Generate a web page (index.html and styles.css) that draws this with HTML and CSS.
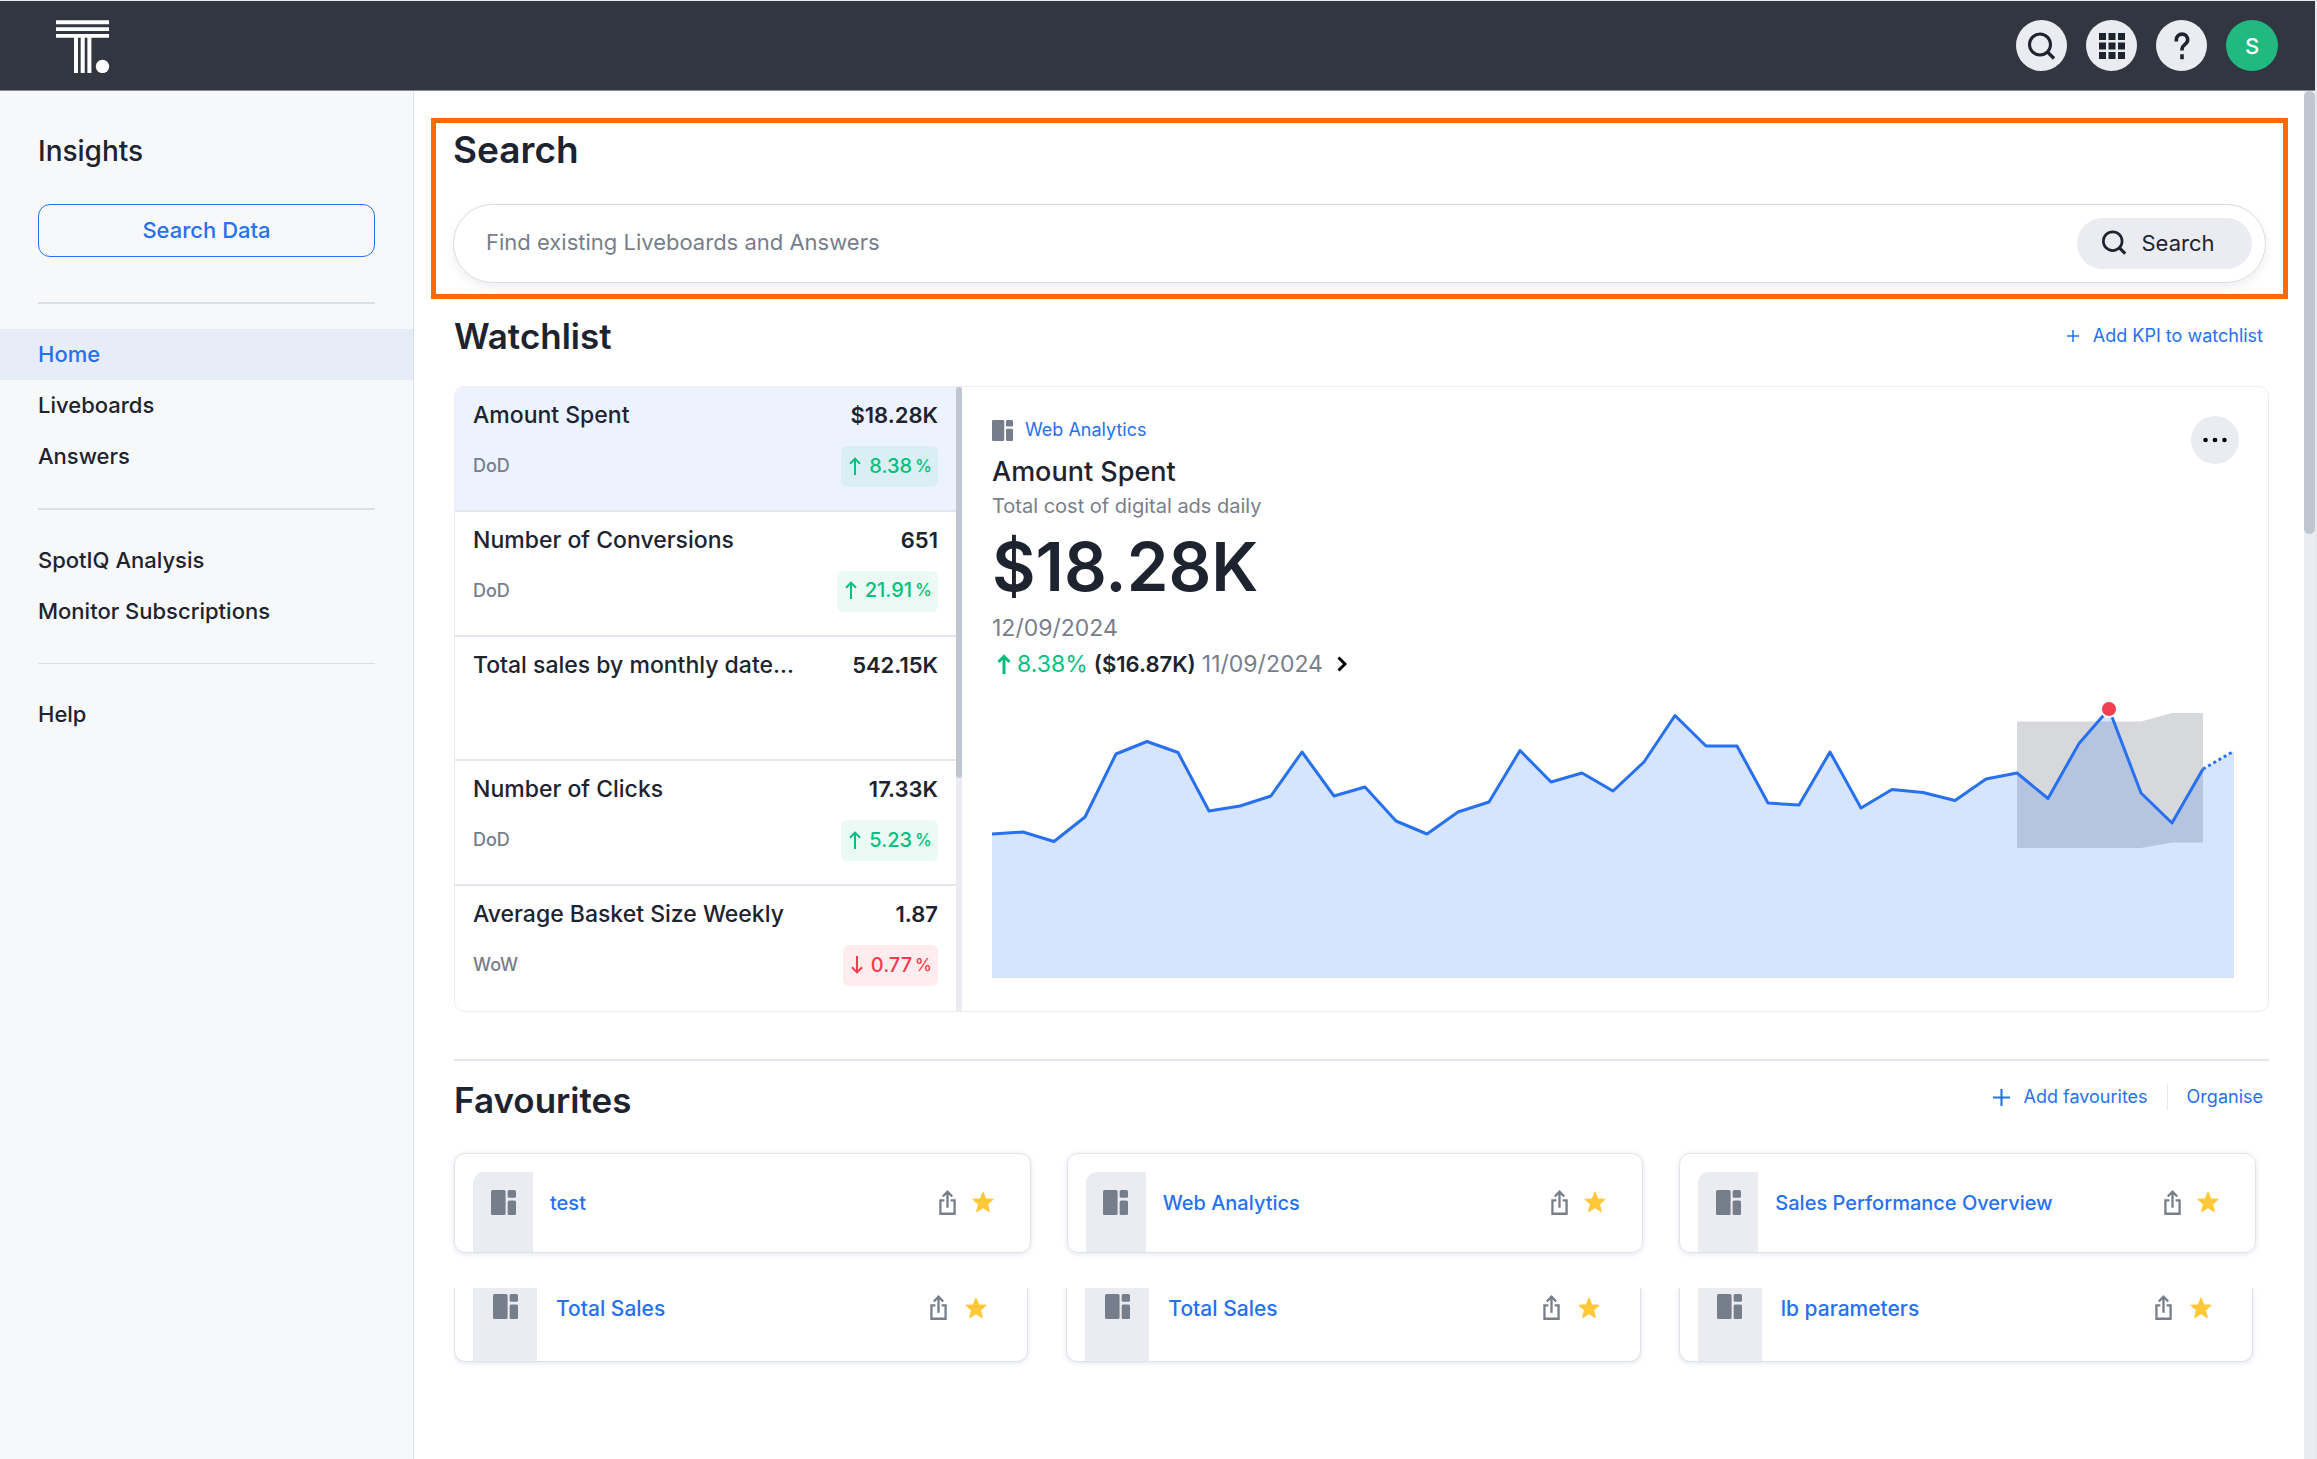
FILE: index.html
```html
<!DOCTYPE html>
<html lang="en">
<head>
<meta charset="utf-8">
<title>Insights – Home</title>
<link rel="stylesheet" href="styles.css">
</head>
<body>
<svg class="sprite" aria-hidden="true">
  <symbol id="board" viewBox="0 0 24 24"><rect width="14" height="24" rx="1.5"/><rect x="16" width="8" height="7.5" rx="1.5"/><rect x="16" y="10" width="8" height="14" rx="1.5"/></symbol>
  <symbol id="lens" viewBox="0 0 28 28" fill="none" stroke="currentColor"><circle cx="12" cy="12.500" r="10.500" stroke-width="3"/><path d="M19.500 20 26 26.500" stroke-width="3.400"/></symbol>
  <symbol id="share" viewBox="0 0 16 24" fill="none" stroke="currentColor" stroke-width="2.200"><path d="M5 10H1.200v12.800h13.600V10H11M8 17V2M3.500 6.200 8 1.600l4.500 4.600"/></symbol>
  <symbol id="star" viewBox="0 0 22 22"><path fill="currentColor" stroke="currentColor" stroke-width="1.200" stroke-linejoin="round" d="m11 1.200 2.700 6.700 7.200.5-5.500 4.600 1.800 7.400-6.200-3.900-6.200 3.900 1.800-7.400L1.100 8.400l7.200-.5z"/></symbol>
  <symbol id="arrow" viewBox="0 0 12 18" fill="none" stroke="currentColor"><path d="M6 18V2M1 6.700 6 1.600l5 5.100"/></symbol>
  <symbol id="plus" viewBox="0 0 16 16" stroke="currentColor" fill="none"><path d="M8 0v16M0 8h16"/></symbol>
</svg>
<div class="app">
  <header class="topbar">
    <a class="logo" href="#" aria-label="Home">
      <svg viewBox="0 0 54 54" fill="#fff"><path d="M0 1.200h53v4H0zM0 8.200h53v3.800H0zM0 15h53v3.800H0zM18 18h4v36h-4zM24.700 18h4v36h-4zM31.400 18h4v36h-4z"/><circle cx="46.500" cy="47.500" r="6.700"/></svg>
    </a>
    <nav class="tools" aria-label="Tools">
      <button class="round" aria-label="Search"><svg width="28" height="28"><use href="#lens"/></svg></button>
      <button class="round" aria-label="Apps"><svg width="28" height="28" viewBox="0 0 28 28" fill="currentColor"><path d="M1 1h7v7H1zM10.500 1h7v7h-7zM20 1h7v7h-7zM1 10.500h7v7H1zM10.500 10.500h7v7h-7zM20 10.500h7v7h-7zM1 20h7v7H1zM10.500 20h7v7h-7zM20 20h7v7h-7z"/></svg></button>
      <button class="round" aria-label="Help"><svg width="16" height="28" viewBox="0 0 16 28" fill="none" stroke="currentColor" stroke-width="3.600"><path d="M2.300 9.500V7.800a5.700 5.700 0 0 1 11.400 0c0 5-5.700 4.700-5.700 9.200v1.500M8 22.300v5"/></svg></button>
      <button class="round avatar">S</button>
    </nav>
  </header>
  <div class="shell">
    <aside class="sidebar">
      <h1 class="sidebar-title">Insights</h1>
      <button class="outline">Search Data</button>
      <hr>
      <nav class="menu">
        <a class="active" href="#">Home</a>
        <a href="#">Liveboards</a>
        <a href="#">Answers</a>
      </nav>
      <hr>
      <nav class="menu">
        <a href="#">SpotIQ Analysis</a>
        <a href="#">Monitor Subscriptions</a>
      </nav>
      <hr class="thin">
      <nav class="menu"><a href="#">Help</a></nav>
    </aside>
    <main class="main">
      <section class="search">
        <h2>Search</h2>
        <form class="searchbox">
          <input type="text" aria-label="Search" placeholder="Find existing Liveboards and Answers">
          <button type="button" class="search-button"><svg width="25" height="25"><use href="#lens"/></svg>Search</button>
        </form>
      </section>
      <section class="block">
        <div class="heading">
          <h2>Watchlist</h2>
          <a class="action" href="#"><svg class="plus" width="12" height="12"><use href="#plus"/></svg>Add KPI to watchlist</a>
        </div>
        <div class="watch">
          <ul class="kpis">
            <li class="selected"><span class="name">Amount Spent</span><b>$18.28K</b><span class="period">DoD</span><span class="badge"><svg><use href="#arrow"/></svg>8.38<small>%</small></span></li>
            <li><span class="name">Number of Conversions</span><b>651</b><span class="period">DoD</span><span class="badge"><svg><use href="#arrow"/></svg>21.91<small>%</small></span></li>
            <li><span class="name">Total sales by monthly date…</span><b>542.15K</b></li>
            <li><span class="name">Number of Clicks</span><b>17.33K</b><span class="period">DoD</span><span class="badge"><svg><use href="#arrow"/></svg>5.23<small>%</small></span></li>
            <li><span class="name">Average Basket Size Weekly</span><b>1.87</b><span class="period">WoW</span><span class="badge down"><svg viewBox="0 0 12 18" fill="none" stroke="currentColor"><path d="M6 0v16M1 11.300l5 5.100 5-5.100"/></svg>0.77<small>%</small></span></li>
          </ul>
          <div class="track"><div class="thumb"></div></div>
          <article class="detail">
            <div class="detail-head">
              <div>
                <a class="source" href="#"><svg width="21" height="21"><use href="#board"/></svg>Web Analytics</a>
                <h3>Amount Spent</h3>
                <p class="subtitle">Total cost of digital ads daily</p>
                <p class="big">$18.28K</p>
                <p class="date">12/09/2024</p>
                <p class="change"><svg class="up" width="14" height="20" viewBox="0 0 14 20"><path d="M7 20V3M1.500 8 7 2.300 12.500 8"/></svg><span class="gain">8.38%</span><b>($16.87K)</b><span>11/09/2024</span><svg class="chevron" width="10" height="16" viewBox="0 0 10 16"><path d="m1.500 1.500 6.500 6.500-6.500 6.500"/></svg></p>
              </div>
              <button class="more" aria-label="More"><svg width="24" height="6" viewBox="0 0 24 6"><circle cx="2.500" cy="3" r="2.300"/><circle cx="12" cy="3" r="2.300"/><circle cx="21.500" cy="3" r="2.300"/></svg></button>
            </div>
            <svg class="chart" viewBox="0 700 1242 280" role="img" aria-label="Amount spent per day">
              <path fill="#d7d8dc" d="M1025 722.500h124l31-8.500h31v129.500h-31l-31 5.500h-124z"/>
              <path fill="#2770ef" fill-opacity=".19" d="M0 835 31 833 62 842.500 93 818 124 755 155 742.500 186 753.500 217 812 248 807 279 797 310 753 342 797 373 788 404 822 435 835 466 813 497 803 528 751.500 559 783 590 774 621 792 652 763 683 716.500 714 747 745 747 776 804 807 806 838 753 869 809 900 790.500 931 793.500 963 801.500 994 780 1025 774 1056 799.500 1087 744.500 1117 710 1149 794 1180 824 1211 770 1242 752V979H0z"/>
              <path class="line" d="M0 835 31 833 62 842.500 93 818 124 755 155 742.500 186 753.500 217 812 248 807 279 797 310 753 342 797 373 788 404 822 435 835 466 813 497 803 528 751.500 559 783 590 774 621 792 652 763 683 716.500 714 747 745 747 776 804 807 806 838 753 869 809 900 790.500 931 793.500 963 801.500 994 780 1025 774 1056 799.500 1087 744.500 1117 710 1149 794 1180 824 1211 770"/>
              <path class="line dotted" d="M1211 770 1242 752"/>
              <circle cx="1117" cy="710" r="8" fill="#f04052" stroke="#fff" stroke-width="2"/>
            </svg>
          </article>
        </div>
      </section>
      <section class="block favourites">
        <div class="heading">
          <h2>Favourites</h2>
          <div class="actions">
            <a class="action" href="#"><svg class="plus bold" width="17" height="17"><use href="#plus"/></svg>Add favourites</a>
            <a class="action last" href="#">Organise</a>
          </div>
        </div>
        <ul class="cards">
          <li><span class="tile"><svg><use href="#board"/></svg></span><a href="#">test</a><button aria-label="Share"><svg class="share"><use href="#share"/></svg></button><button aria-label="Unfavourite"><svg class="star"><use href="#star"/></svg></button></li>
          <li><span class="tile"><svg><use href="#board"/></svg></span><a href="#">Web Analytics</a><button aria-label="Share"><svg class="share"><use href="#share"/></svg></button><button aria-label="Unfavourite"><svg class="star"><use href="#star"/></svg></button></li>
          <li><span class="tile"><svg><use href="#board"/></svg></span><a href="#">Sales Performance Overview</a><button aria-label="Share"><svg class="share"><use href="#share"/></svg></button><button aria-label="Unfavourite"><svg class="star"><use href="#star"/></svg></button></li>
        </ul>
        <ul class="cards cut">
          <li><span class="tile"><svg><use href="#board"/></svg></span><a href="#">Total Sales</a><button aria-label="Share"><svg class="share"><use href="#share"/></svg></button><button aria-label="Unfavourite"><svg class="star"><use href="#star"/></svg></button></li>
          <li><span class="tile"><svg><use href="#board"/></svg></span><a href="#">Total Sales</a><button aria-label="Share"><svg class="share"><use href="#share"/></svg></button><button aria-label="Unfavourite"><svg class="star"><use href="#star"/></svg></button></li>
          <li><span class="tile"><svg><use href="#board"/></svg></span><a href="#">lb parameters</a><button aria-label="Share"><svg class="share"><use href="#share"/></svg></button><button aria-label="Unfavourite"><svg class="star"><use href="#star"/></svg></button></li>
        </ul>
      </section>
    </main>
    <div class="page-track"><div class="page-thumb"></div></div>
  </div>
</div>
</body>
</html>
```
FILE: styles.css
```css
* { box-sizing: border-box; }

body {
  margin: 0;
  background: #fff;
  color: #1d232f;
  font-family: Inter, "Liberation Sans", sans-serif;
  font-size: 22px;
  font-weight: 500;
}

h1, h2, h3, p, ul { margin: 0; padding: 0; }
ul { list-style: none; }
a { color: #2770ef; text-decoration: none; }
svg { display: block; flex: none; }
button { padding: 0; border: 0; background: none; color: inherit; font: inherit; cursor: pointer; }
.sprite { position: absolute; width: 0; height: 0; }

.app {
  display: flex;
  flex-direction: column;
  min-height: 100vh;
  border-top: 1px solid #e6e9ee;
  border-right: 2px solid #e6e9ee;
}

/* Top bar */
.topbar {
  display: flex;
  align-items: center;
  justify-content: space-between;
  height: 90px;
  padding: 0 37px 0 56px;
  background: #323641;
  border-bottom: 1px solid #8b8d96;
}
.logo svg { width: 54px; height: 54px; }
.tools { display: flex; gap: 19px; }
.round {
  display: flex;
  align-items: center;
  justify-content: center;
  width: 51px;
  height: 51px;
  border-radius: 50%;
  background: #eaecf2;
}
.avatar { width: 52px; background: #20b980; color: #fff; }

.shell { display: flex; flex: 1; }

/* Sidebar */
.sidebar {
  flex: none;
  width: 414px;
  padding-top: 40px;
  background: #f7f8fa;
  border-right: 1px solid #d9dde6;
}
.sidebar-title { padding-left: 38px; font-size: 28px; font-weight: 500; line-height: 40px; }
.outline {
  display: block;
  width: calc(100% - 76px);
  height: 53px;
  margin: 33px 38px 45px;
  padding-bottom: 2px;
  border: 1px solid #2770ef;
  border-radius: 12px;
  color: #2770ef;
}
.sidebar hr { height: 2px; margin: 26px 38px 25px; border: 0; background: #d9dfe7; }
.sidebar hr.thin { height: 1px; }
.menu a { display: block; padding-left: 38px; color: inherit; line-height: 51px; }
.menu .active { background: #e6edf9; color: #2770ef; }

/* Search */
.main { flex: 1; min-width: 0; padding: 27px 16px 40px 17px; }
h2 { font-size: 35px; font-weight: 600; line-height: 44px; }
.search { padding: 5px 17px 11px; border: 5px solid #ff6b00; }
.search h2 { font-size: 37px; }
.searchbox {
  display: flex;
  align-items: center;
  height: 79px;
  margin-top: 32px;
  padding: 0 13px 0 32px;
  border: 1px solid #d9dbe4;
  border-radius: 40px;
  box-shadow: 0 4px 10px rgba(30, 40, 60, .08);
}
.searchbox input { flex: 1; min-width: 0; padding: 0 0 3px; border: 0; outline: 0; background: none; font: inherit; font-weight: 400; }
.searchbox input::placeholder { color: #777e8b; opacity: 1; }
.search-button {
  display: flex;
  align-items: center;
  justify-content: center;
  gap: 14px;
  width: 175px;
  height: 51px;
  padding: 0 12px 2px 0;
  border-radius: 26px;
  background: #eaecf2;
  font-weight: 400;
}

/* Watchlist */
.block { padding: 15px 19px 0 23px; }
.heading { display: flex; align-items: center; justify-content: space-between; padding-right: 6px; }
.action { display: flex; align-items: center; gap: 14px; font-size: 18px; font-weight: 400; line-height: 26px; }
.plus { stroke-width: 2px; }
.watch {
  display: flex;
  margin-top: 28px;
  border: 1px solid #ebedf3;
  border-radius: 10px;
  overflow: hidden;
}
.kpis { display: grid; grid-template-rows: repeat(5, 1fr); flex: none; width: 501px; }
.kpis li {
  display: grid;
  grid-template-columns: 1fr auto;
  grid-template-rows: 30px 41px;
  row-gap: 16px;
  align-items: center;
  padding: 13px 18px 0 18px;
  border-bottom: 2px solid #e3e6ed;
}
.kpis li:last-child { border-bottom: 0; }
.kpis .selected { background: #ecf3fe; }
.kpis .name { font-size: 23px; line-height: 30px; }
.kpis b { font-weight: 600; line-height: 30px; text-align: right; }
.period { padding-bottom: 2px; color: #777e8b; font-size: 18px; }
.badge {
  display: flex;
  align-items: center;
  justify-self: end;
  height: 41px;
  padding: 0 6px 2px 8px;
  border-radius: 6px;
  background: rgba(6, 191, 127, .08);
  color: #06bf7f;
  font-size: 20px;
}
.badge svg { width: 12px; height: 18px; margin-right: 8px; stroke-width: 2px; }
.badge small { margin-left: 3px; font-size: 17px; }
.badge.down { background: #feecee; color: #f03e50; }
.track { flex: none; width: 6px; background: #eaecf2; }
.thumb { height: 391px; border-radius: 3px; background: #c0c6d0; }

.detail { flex: 1; min-width: 0; padding: 29px 29px 32px 30px; }
.detail-head { display: flex; align-items: flex-start; justify-content: space-between; }
.source { display: flex; align-items: center; gap: 12px; font-size: 18px; font-weight: 400; line-height: 28px; }
.source svg { fill: #777e8b; }
h3 { margin-top: 11px; font-size: 27px; font-weight: 500; line-height: 34px; }
.detail p { color: #777e8b; font-weight: 400; }
.detail .subtitle { margin-top: 3px; font-size: 20px; line-height: 28px; }
.detail .big { margin-top: 7px; color: #1d232f; font-size: 67px; font-weight: 600; line-height: 80px; }
.detail .date { margin-top: 6px; font-size: 23px; line-height: 30px; }
.detail .change { display: flex; align-items: center; gap: 6px; margin-top: 6px; padding-left: 5px; font-size: 23px; line-height: 30px; }
.change b { color: #1d232f; font-size: 22px; font-weight: 600; }
.change .gain { color: #06bf7f; }
.change .up { fill: none; stroke: #06bf7f; stroke-width: 3px; }
.change .chevron { margin-left: 8px; fill: none; stroke: #000; stroke-width: 3px; }
.more {
  display: flex;
  align-items: center;
  justify-content: center;
  width: 48px;
  height: 48px;
  border-radius: 50%;
  background: #eaecf2;
}
.chart { width: calc(100% - 5px); height: auto; margin-top: 20px; }
.line { fill: none; stroke: #2770ef; stroke-width: 3px; stroke-linejoin: round; }
.dotted { stroke-dasharray: 3 3; }

/* Favourites */
.favourites { padding-top: 17px; }
.favourites::before { content: ""; display: block; height: 2px; margin: 30px 0 17px; background: #e0e4ec; }
.actions { display: flex; align-items: center; padding-bottom: 6px; }
.action.last { margin-left: 19px; padding-left: 19px; border-left: 1px solid #e3e6ed; }
.cards { display: grid; grid-template-columns: repeat(3, 1fr); gap: 36px; margin-top: 31px; padding-right: 13px; }
.cards li {
  display: flex;
  align-items: center;
  height: 100px;
  padding: 0 36px 0 18px;
  border: 1px solid #dfe3ea;
  border-radius: 11px;
  box-shadow: 0 1px 5px rgba(40, 60, 100, .14);
}
.tile {
  display: flex;
  justify-content: center;
  align-self: flex-end;
  width: 60px;
  height: 80px;
  padding-top: 18px;
  border-radius: 11px 0 0 0;
  background: #eaecf2;
}
.tile svg { width: 25px; height: 25px; fill: #777e8b; }
.cards a { flex: 1; margin-left: 17px; font-size: 20px; }
.cards button { padding-bottom: 2px; }
.share { width: 17px; height: 25px; color: #777e8b; }
.star { width: 22px; height: 22px; margin-left: 16px; color: #ffc838; }

/* Second row, cut off by the top of its scroll area */
.cards.cut { gap: 38px; margin-top: 35px; padding-right: 16px; padding-bottom: 10px; overflow: hidden; }
.cut li { height: 74px; padding-right: 40px; padding-bottom: 32px; border-top: 0; border-radius: 0 0 11px 11px; }
.cut .tile { width: 64px; height: 73px; margin-bottom: -32px; padding-top: 6px; border-radius: 0; }
.cut a { margin-left: 19px; font-size: 21px; }
.cut .star { margin-left: 18px; }

/* Page scroll bar */
.page-track { flex: none; width: 11px; background: #eaecf2; }
.page-thumb { height: 443px; border-radius: 6px; background: #c0c6d0; }
```
